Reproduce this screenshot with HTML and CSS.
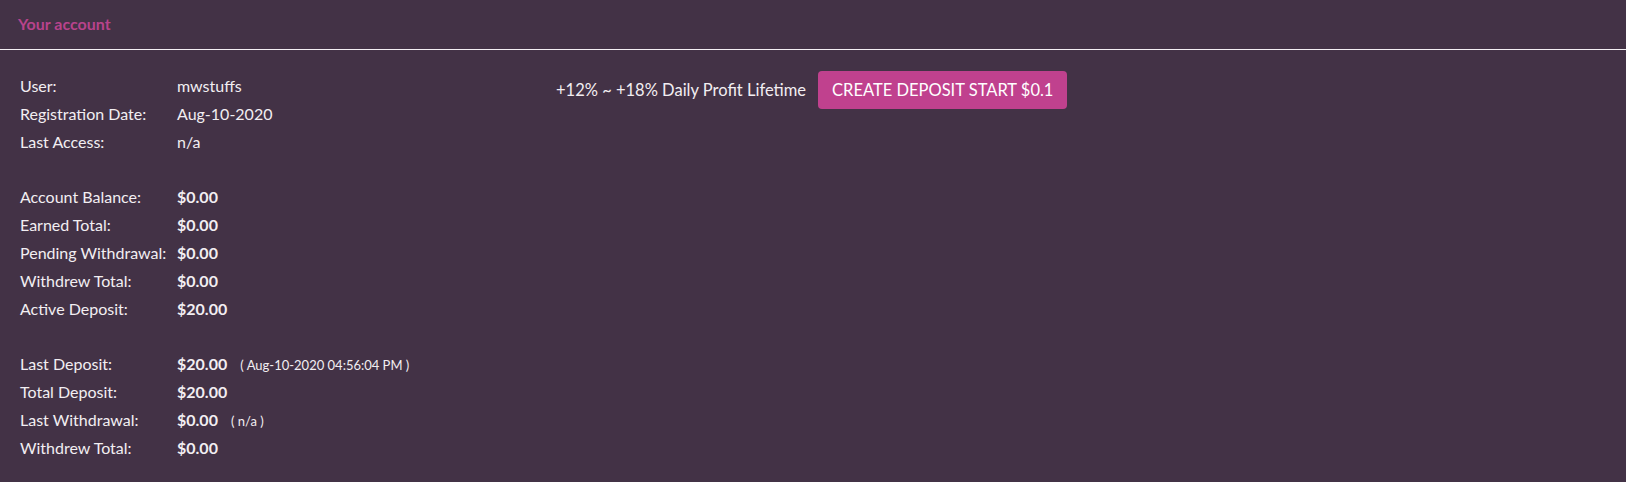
FILE: index.html
```html
<!DOCTYPE html>
<html lang="en">
<head>
  <meta charset="UTF-8" />
  <title>Your account</title>
  <link rel="stylesheet" href="styles.css">
</head>
<body>
  <div class="panel">
    <div class="panel-head">Your account</div>

    <div class="panel-body">
      <table class="info">
        <tr><td class="lbl">User:</td><td>mwstuffs</td></tr>
        <tr><td class="lbl">Registration Date:</td><td>Aug-10-2020</td></tr>
        <tr><td class="lbl">Last Access:</td><td>n/a</td></tr>
        <tr class="spacer"><td colspan="2"></td></tr>
        <tr><td class="lbl">Account Balance:</td><td><b>$0.00</b></td></tr>
        <tr><td class="lbl">Earned Total:</td><td><b>$0.00</b></td></tr>
        <tr><td class="lbl">Pending Withdrawal:</td><td><b>$0.00</b></td></tr>
        <tr><td class="lbl">Withdrew Total:</td><td><b>$0.00</b></td></tr>
        <tr><td class="lbl">Active Deposit:</td><td><b>$20.00</b></td></tr>
        <tr class="spacer"><td colspan="2"></td></tr>
        <tr><td class="lbl">Last Deposit:</td><td><b>$20.00</b> <small>( Aug-10-2020 04:56:04 PM )</small></td></tr>
        <tr><td class="lbl">Total Deposit:</td><td><b>$20.00</b></td></tr>
        <tr><td class="lbl">Last Withdrawal:</td><td><b>$0.00</b> <small>( n/a )</small></td></tr>
        <tr><td class="lbl">Withdrew Total:</td><td><b>$0.00</b></td></tr>
      </table>

      <div class="promo">
        <span>+12% ~ +18% Daily Profit Lifetime</span>
        <a class="btn" href="#">CREATE DEPOSIT START $0.1</a>
      </div>
    </div>
  </div>
</body>
</html>
```

FILE: styles.css
```css
body {
  margin: 0;
  background: #433246;
  color: #f2eef2;
  font-family: Lato, 'Open Sans', sans-serif;
  font-size: 16px;
}

.panel-head {
  height: 49px;
  line-height: 48px;
  padding-left: 18px;
  color: #b8438c;
  font-weight: bold;
  font-size: 16px;
  border-bottom: 1px solid #f4f0f4;
}

.panel-body {
  display: flex;
  align-items: flex-start;
  padding: 21px 20px 0;
}

.info {
  border-collapse: collapse;
  width: 536px;
}

.info td {
  height: 28px;
  padding: 0;
  vertical-align: middle;
  white-space: nowrap;
}

.info .lbl {
  width: 157px;
}

.info .spacer td {
  height: 27px;
}

.info b {
  font-weight: bold;
  margin-right: 9px;
}

.info small {
  font-size: 13px;
}

.promo {
  display: flex;
  align-items: center;
  gap: 12px;
  font-size: 16.5px;
}

.btn {
  display: inline-block;
  background: #c0418e;
  color: #fff;
  text-decoration: none;
  padding: 0 14px;
  height: 38px;
  line-height: 38px;
  border-radius: 4px;
  font-size: 16.5px;
}
```
